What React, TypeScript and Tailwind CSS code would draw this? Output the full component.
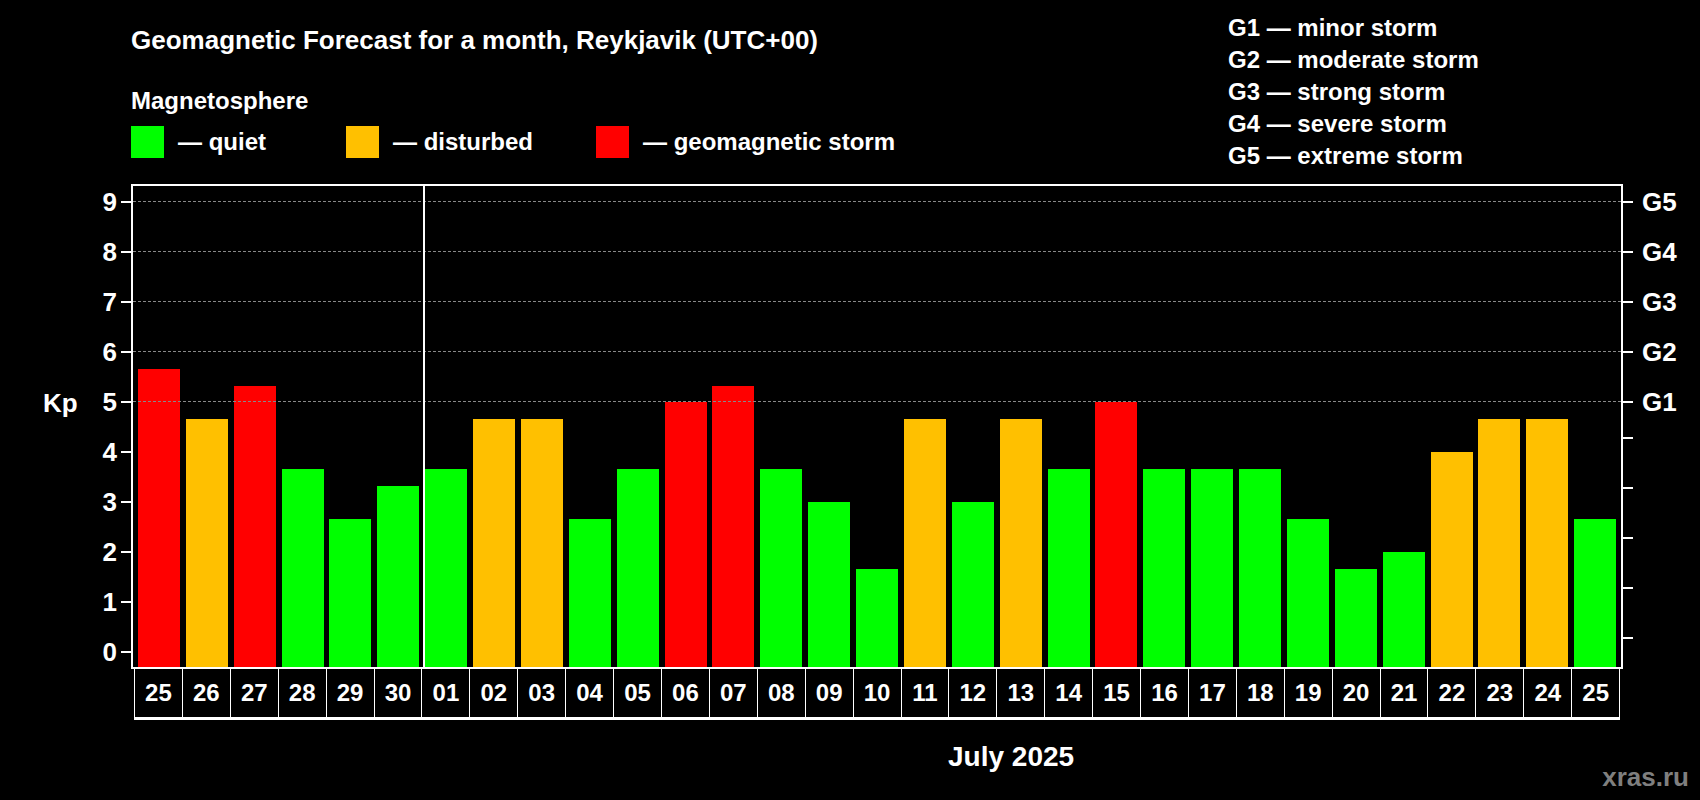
const days = [
  ["25", 5.67], ["26", 4.67], ["27", 5.33], ["28", 3.67], ["29", 2.67], ["30", 3.33],
  ["01", 3.67], ["02", 4.67], ["03", 4.67], ["04", 2.67], ["05", 3.67], ["06", 5],
  ["07", 5.33], ["08", 3.67], ["09", 3], ["10", 1.67], ["11", 4.67], ["12", 3],
  ["13", 4.67], ["14", 3.67], ["15", 5], ["16", 3.67], ["17", 3.67], ["18", 3.67],
  ["19", 2.67], ["20", 1.67], ["21", 2], ["22", 4], ["23", 4.67], ["24", 4.67], ["25", 2.67],
] as [string, number][];

const colorFor = (kp: number) =>
  kp >= 5 ? "bg-[#ff0000]" : kp >= 4 ? "bg-[#ffc000]" : "bg-[#00ff00]";

const UNIT = 50;
const ZERO = 17; // distance from plot bottom to Kp 0
const levels = [0, 1, 2, 3, 4, 5, 6, 7, 8, 9];
const gLabels: Record<number, string> = { 5: "G1", 6: "G2", 7: "G3", 8: "G4", 9: "G5" };

export default function App() {
  return (
    <div
      className="w-[1700px] h-[800px] bg-black text-white font-bold relative overflow-hidden"
      style={{ fontFamily: '"Liberation Sans", Arial, sans-serif' }}
    >
      {/* header */}
      <div className="flex h-[184px]">
        <div className="pl-[131px] pt-[24px] w-[1228px]">
          <div className="text-[26px] leading-[32px]">
            Geomagnetic Forecast for a month, Reykjavik (UTC+00)
          </div>
          <div className="text-[24px] leading-[30px] mt-[30px]">Magnetosphere</div>
          <div className="flex items-center mt-[8px] text-[24px]">
            <div className="w-[33px] h-[32px] bg-[#00ff00]" />
            <span className="ml-[14px] w-[168px]">— quiet</span>
            <div className="w-[33px] h-[32px] bg-[#ffc000]" />
            <span className="ml-[14px] w-[203px]">— disturbed</span>
            <div className="w-[33px] h-[32px] bg-[#ff0000]" />
            <span className="ml-[14px]">— geomagnetic storm</span>
          </div>
        </div>
        <div className="pt-[12px] text-[24px] leading-[32px]">
          <div>G1 — minor storm</div>
          <div>G2 — moderate storm</div>
          <div>G3 — strong storm</div>
          <div>G4 — severe storm</div>
          <div>G5 — extreme storm</div>
        </div>
      </div>

      {/* chart */}
      <div className="flex">
        <div className="w-[131px] relative h-[485px]">
          <div className="absolute left-[43px] top-[200px] text-[26px]">Kp</div>
          {levels.map((l) => (
            <div
              key={l}
              className="absolute right-0 flex items-center"
              style={{ top: 485 - ZERO - l * UNIT - 15 }}
            >
              <span className="text-[26px] leading-[30px] mr-[4px]">{l}</span>
              <div className="w-[10px] h-[2px] bg-white" />
            </div>
          ))}
        </div>
        <div className="w-[1492px]">
          <div className="relative h-[485px] border-2 border-white flex items-end px-[2px]">
            {levels.slice(5).map((l) => (
              <div
                key={l}
                className="absolute left-0 right-0 border-t border-dashed border-[#888]"
                style={{ bottom: ZERO + l * UNIT - 2 }}
              />
            ))}
            <div className="absolute top-0 bottom-0 left-[290px] w-[2px] bg-white" />
            {days.map(([d, kp], i) => (
              <div key={i} className="flex-1 flex justify-center">
                <div
                  className={`w-[42px] ${colorFor(kp)}`}
                  style={{ height: ZERO + kp * UNIT - 2 }}
                />
              </div>
            ))}
          </div>
          <div className="flex border-b-[3px] border-white ml-[3px] mr-[3px]">
            {days.map(([d], i) => (
              <div
                key={i}
                className="flex-1 h-[48px] border-l border-white last:border-r flex items-center justify-center text-[24px]"
              >
                {d}
              </div>
            ))}
          </div>
        </div>
        <div className="w-[77px] relative h-[485px]">
          {levels.map((l) => (
            <div
              key={l}
              className="absolute left-0 flex items-center"
              style={{ top: 485 - ZERO - l * UNIT - 15 }}
            >
              <div className="w-[10px] h-[2px] bg-white" />
              <span className="text-[26px] leading-[30px] ml-[9px]">{gLabels[l] ?? ""}</span>
            </div>
          ))}
        </div>
      </div>

      <div className="absolute left-[948px] top-[736px] text-[28px]">July 2025</div>
      <div className="absolute right-[11px] top-[758px] text-[26px] text-[#7f7f7f]">xras.ru</div>
    </div>
  );
}
